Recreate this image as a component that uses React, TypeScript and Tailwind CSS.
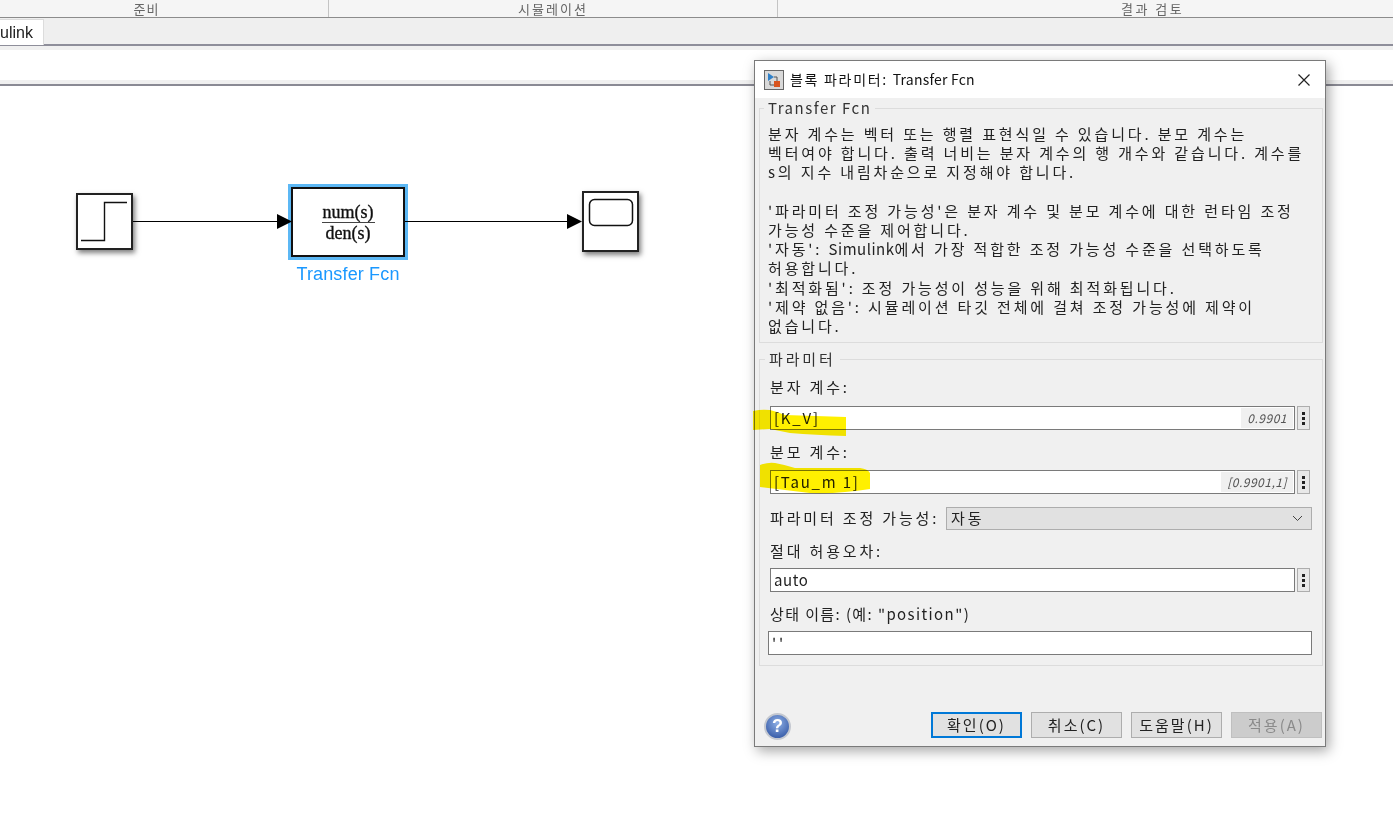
import type { ReactNode } from 'react';

const cjk = "font-['Noto_Sans_CJK_KR','Noto_Sans',sans-serif]";

const helpLines: ReactNode[] = [
  '분자 계수는 벡터 또는 행렬 표현식일 수 있습니다. 분모 계수는',
  '벡터여야 합니다. 출력 너비는 분자 계수의 행 개수와 같습니다. 계수를',
  's의 지수 내림차순으로 지정해야 합니다.',
  '\u00a0',
  "'파라미터 조정 가능성'은 분자 계수 및 분모 계수에 대한 런타임 조정",
  '가능성 수준을 제어합니다.',
  <>
    '자동': <span className="tracking-[0.5px]">Simulink</span>에서 가장 적합한 조정 가능성 수준을 선택하도록
  </>,
  '허용합니다.',
  "'최적화됨': 조정 가능성이 성능을 위해 최적화됩니다.",
  "'제약 없음': 시뮬레이션 타깃 전체에 걸쳐 조정 가능성에 제약이",
  '없습니다.',
];

function DotsButton() {
  return (
    <div className="w-[13px] h-[24px] shrink-0 border border-[#adadad] bg-[#e8e8e8] flex flex-col items-center justify-center gap-[2px]">
      <span className="w-[3px] h-[3px] bg-[#222]" />
      <span className="w-[3px] h-[3px] bg-[#222]" />
      <span className="w-[3px] h-[3px] bg-[#222]" />
    </div>
  );
}

function ParamInput({ value, hint, wide }: { value: string; hint?: string; wide?: boolean }) {
  return (
    <div className="flex items-center gap-[2px]">
      <div className="flex-1 h-[24px] border border-[#7a7a7a] bg-white flex items-center justify-between pl-[3px] pr-[1px] text-[15px] text-[#222]">
        <span className={wide ? 'tracking-[1.8px]' : 'tracking-[0.6px]'}>{value}</span>
        {hint && (
          <span className="h-[20px] px-[6px] bg-[#f0f0f0] text-[12px] italic tracking-[0.5px] text-[#555] flex items-center">
            {hint}
          </span>
        )}
      </div>
      <DotsButton />
    </div>
  );
}

function DialogButton({ label, primary, disabled }: { label: string; primary?: boolean; disabled?: boolean }) {
  return (
    <div
      className={
        'w-[91px] h-[26px] flex items-center justify-center text-[15px] tracking-[2px] ' +
        (primary
          ? 'border-2 border-[#0078d7] bg-[#e1e1e1] text-[#222]'
          : disabled
            ? 'border border-[#bfbfbf] bg-[#cccccc] text-[#8a8a8a]'
            : 'border border-[#adadad] bg-[#e1e1e1] text-[#222]')
      }
    >
      {label}
    </div>
  );
}

function Diagram() {
  return (
    <div className="relative flex-1 bg-white">
      <div className="absolute left-[76px] top-[107px] w-[57px] h-[57px] bg-white border-2 border-[#222] shadow-[2px_3px_5px_rgba(0,0,0,0.5)]">
        <svg width="53" height="53" className="block">
          <path d="M3 45.5 H26.5 V7.5 H49" fill="none" stroke="#111" strokeWidth="1.4" />
        </svg>
      </div>

      <div className="absolute left-[288px] top-[98px] w-[120px] h-[76px] border-[3px] border-[#5cb8f5] bg-white">
        <div className="w-full h-full border-2 border-[#111] flex flex-col items-center justify-center font-['Liberation_Serif',serif] text-[18px] [-webkit-text-stroke:0.35px_#111] text-[#111] leading-[20px]">
          <span>num(s)</span>
          <span className="w-[53px] h-px bg-[#444]" />
          <span>den(s)</span>
        </div>
      </div>
      <div className="absolute left-[268px] top-[176px] w-[160px] text-center font-['Liberation_Sans',sans-serif] text-[18px] tracking-[0.15px] leading-[24px] text-[#1a98ff]">
        Transfer Fcn
      </div>

      <div className="absolute left-[582px] top-[105px] w-[57px] h-[61px] bg-white border-2 border-[#222] shadow-[2px_3px_5px_rgba(0,0,0,0.5)]">
        <svg width="53" height="57" className="block">
          <rect x="5.5" y="6.5" width="43" height="26" rx="5" fill="none" stroke="#111" strokeWidth="1.5" />
        </svg>
      </div>

      {/* signal lines, canvas starts at y=86 */}
      <svg className="absolute left-0 top-0" width="700" height="220">
        <line x1="133" y1="135.5" x2="280" y2="135.5" stroke="#000" strokeWidth="1" />
        <path d="M277 128 L292 135.5 L277 143 Z" fill="#000" />
        <line x1="405" y1="135.5" x2="570" y2="135.5" stroke="#000" strokeWidth="1" />
        <path d="M567 128 L582 135.5 L567 143 Z" fill="#000" />
      </svg>
    </div>
  );
}

function BlockDialog() {
  return (
    <div className={`absolute left-[754px] top-[60px] w-[572px] h-[687px] flex flex-col border border-[#7a7a7a] bg-[#f0f0f0] shadow-[3px_4px_12px_rgba(0,0,0,0.35)] ${cjk}`}>
      <div className="h-[37px] shrink-0 bg-white flex items-center pl-[9px] pr-[14px]">
        <svg width="20" height="20" viewBox="0 0 20 20" className="shrink-0">
          <rect x="0.5" y="0.5" width="19" height="19" fill="#d9d9d9" stroke="#666" />
          <path d="M4 3 L10 7 L4 11 Z" fill="#2f80c8" />
          <path d="M6 11 V15 H10 M10 7 H13 V11" fill="none" stroke="#555" strokeWidth="1" />
          <rect x="10" y="11" width="6" height="6" fill="#d9541e" />
        </svg>
        <span className="ml-[6px] text-[14px] text-[#111] tracking-[1.7px]">
          블록 파라미터: <span className="tracking-[0.2px]">Transfer Fcn</span>
        </span>
        <svg width="14" height="14" viewBox="0 0 14 14" className="ml-auto">
          <path d="M1.5 1.5 L12.5 12.5 M12.5 1.5 L1.5 12.5" stroke="#222" strokeWidth="1.2" fill="none" />
        </svg>
      </div>

      <div className="flex-1 flex flex-col pl-[4px] pr-[2px]">
        <fieldset className="border border-[#dcdcdc] h-[245px] px-[8px]">
          <legend className="-ml-[4px] px-[4px] text-[15px] leading-[20px] tracking-[1.5px] text-[#333]">Transfer Fcn</legend>
          <div className="text-[15px] leading-[19.2px] tracking-[2.85px] text-[#222] mt-[6px] whitespace-nowrap">
            {helpLines.map((line, i) => (
              <div key={i}>{line}</div>
            ))}
          </div>
        </fieldset>

        <fieldset className="relative mt-[6px] border border-[#dcdcdc] h-[317px] pl-[10px] pr-[12px]">
          <legend className="-ml-[5px] px-[4px] text-[15px] leading-[20px] tracking-[2.85px] text-[#333]">파라미터</legend>
          <div className="text-[15px] tracking-[2.85px] text-[#222]">
            <div className="h-[22px] leading-[22px] mt-[7px] mb-[8px]">분자 계수:</div>
            <ParamInput value="[K_V]" hint="0.9901" wide />
            <div className="h-[22px] leading-[22px] mt-[11px] mb-[7px]">분모 계수:</div>
            <ParamInput value="[Tau_m 1]" hint="[0.9901,1]" wide />
            <div className="flex items-center justify-between mt-[13px] h-[23px]">
              <span>파라미터 조정 가능성:</span>
              <div className="w-[366px] h-[23px] -mr-[2px] border border-[#adadad] bg-[#e1e1e1] flex items-center justify-between pl-[4px] pr-[8px]">
                <span>자동</span>
                <svg width="11" height="7" viewBox="0 0 11 7">
                  <path d="M1 1 L5.5 5.5 L10 1" fill="none" stroke="#444" strokeWidth="1" />
                </svg>
              </div>
            </div>
            <div className="h-[22px] leading-[22px] mt-[10px] mb-[6px]">절대 허용오차:</div>
            <ParamInput value="auto" />
            <div className="h-[22px] leading-[22px] mt-[11px] mb-[6px] tracking-[1.4px]">상태 이름: (예: "position")</div>
            <div className="h-[24px] -ml-[2px] -mr-[2px] border border-[#7a7a7a] bg-white pl-[3px] leading-[22px]">''</div>
          </div>

          {/* marker strokes painted over the two inputs */}
          <svg className="absolute left-0 top-0 overflow-visible mix-blend-multiply pointer-events-none" width="130" height="140">
            <path d="M-7 42 Q2 40 10 41 Q18 43 25 46 L86 48 L86 67 Q55 66 30 64 L10 60 L-7 61 Z" fill="#fff000" />
            <path d="M0 96 Q8 93 15 94 Q26 96 35 99 L100 99 Q108 100 110 104 L110 120 Q80 125 50 124 L0 118 Z" fill="#fff000" />
          </svg>
        </fieldset>
      </div>

      <div className="absolute left-[9px] top-[652px] w-[27px] h-[27px] rounded-full bg-[radial-gradient(circle_at_50%_35%,#8fb0e6,#3f63ad_75%)] border-2 border-[#c4c8d0] flex items-center justify-center text-white font-['Liberation_Sans',sans-serif] font-bold text-[18px]">
        ?
      </div>

      <div className="flex justify-end gap-[9px] pr-[3px] pb-[8px]">
        <DialogButton label="확인(O)" primary />
        <DialogButton label="취소(C)" />
        <DialogButton label="도움말(H)" />
        <DialogButton label="적용(A)" disabled />
      </div>
    </div>
  );
}

export default function App() {
  return (
    <div className={`relative w-[1393px] h-[822px] overflow-hidden bg-white flex flex-col ${cjk}`}>
      {/* toolstrip section labels */}
      <div className="h-[18px] shrink-0 flex bg-[#f5f5f5] border-b border-[#8c8c8c] text-[13px] leading-[17px] text-[#666]">
        <div className="w-[329px] border-r border-[#c4c4c4] pr-[35px] text-center tracking-[1px]">준비</div>
        <div className="w-[449px] border-r border-[#c4c4c4] text-center tracking-[2px]">시뮬레이션</div>
        <div className="flex-1 pl-[343px] tracking-[2.5px]">결과 검토</div>
      </div>

      {/* tab strip */}
      <div className="h-[28px] shrink-0 flex items-end bg-[#efefef] border-b-2 border-[#8e8e9a]">
        <div className="w-[44px] h-[26px] -mb-[1px] bg-white border-r border-t border-[#dcdcdc] text-right pr-[10px] text-[16px] leading-[26px] text-[#222] font-['Liberation_Sans',sans-serif]">
          ulink
        </div>
      </div>

      {/* address bar */}
      <div className="h-[38px] shrink-0 border-y-4 border-[#f0f0f0] bg-white" />
      <div className="h-[2px] shrink-0 bg-[#8a8a94]" />

      <Diagram />
      <BlockDialog />
    </div>
  );
}
